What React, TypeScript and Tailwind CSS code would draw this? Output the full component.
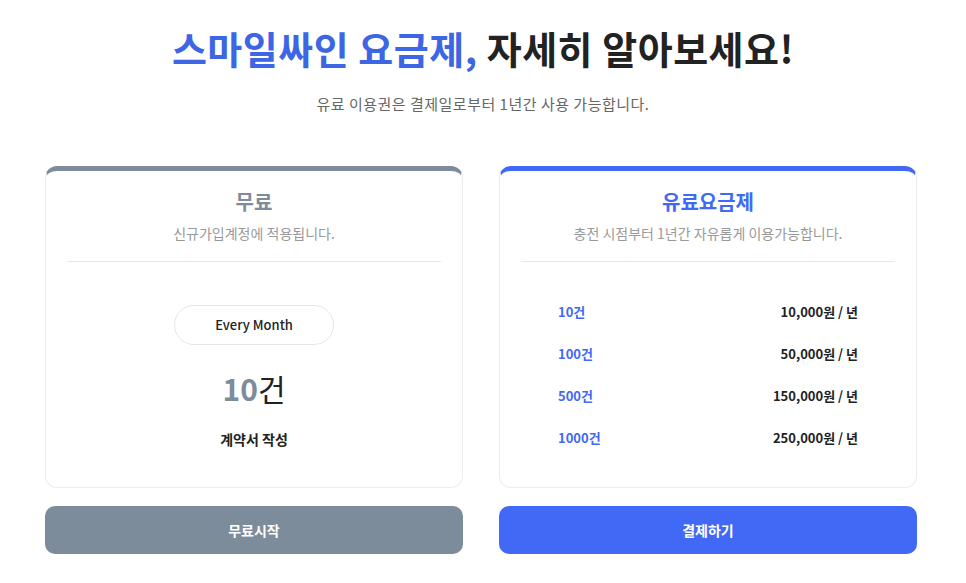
import React from "react";

const plans = [
  { count: "10건", price: "10,000원 / 년" },
  { count: "100건", price: "50,000원 / 년" },
  { count: "500건", price: "150,000원 / 년" },
  { count: "1000건", price: "250,000원 / 년" },
];

export default function App() {
  return (
    <div
      className="min-h-screen bg-white flex flex-col items-center"
      style={{ fontFamily: '"Noto Sans CJK KR", "Noto Sans", sans-serif' }}
    >
      {/* Heading */}
      <h1 className="mt-[22px] text-[38px] leading-[52px] font-bold tracking-[0.5px] text-[#222]">
        <span className="text-[#3c66e3]">스마일싸인 요금제,</span> 자세히 알아보세요!
      </h1>
      <p className="mt-[19px] text-[15px] leading-[22px] tracking-[0.5px] text-[#666]">
        유료 이용권은 결제일로부터 1년간 사용 가능합니다.
      </p>

      <div className="mt-[51px] grid grid-cols-2 gap-[36px] w-[872px] -ml-[4px]">
        {/* Free plan */}
        <div className="flex flex-col gap-[18px]">
          <div className="h-[322px] rounded-[12px] border border-[#ececec] border-t-[5px] border-t-[#7d8c9a] flex flex-col items-center">
            <h2 className="mt-[16px] text-[20px] leading-[30px] font-bold text-[#7d8c9a]">무료</h2>
            <p className="mt-[6px] text-[14px] leading-[20px] text-[#999]">신규가입계정에 적용됩니다.</p>
            <div className="mt-[18px] h-px w-[374px] bg-[#e8e8e8]" />
            <div className="mt-[43px] w-[160px] h-[40px] rounded-full border border-[#e3e6e8] flex items-center justify-center text-[13px] font-medium text-[#222]">
              Every Month
            </div>
            <div className="mt-[22px] text-[30px] leading-[42px] text-[#222]">
              <span className="font-bold text-[#7d8c9a]">10</span>건
            </div>
            <p className="mt-[20px] text-[14px] leading-[20px] font-semibold text-[#222]">계약서 작성</p>
          </div>
          <button className="h-[48px] rounded-[10px] bg-[#7d8c9a] text-white text-[14px] font-bold">
            무료시작
          </button>
        </div>

        {/* Paid plan */}
        <div className="flex flex-col gap-[18px]">
          <div className="h-[322px] rounded-[12px] border border-[#ececec] border-t-[5px] border-t-[#4169f5] flex flex-col items-center">
            <h2 className="mt-[16px] text-[20px] leading-[30px] font-bold text-[#4169f5]">유료요금제</h2>
            <p className="mt-[6px] text-[14px] leading-[20px] text-[#999]">충전 시점부터 1년간 자유롭게 이용가능합니다.</p>
            <div className="mt-[18px] h-px w-[374px] bg-[#e8e8e8]" />
            <div className="mt-[40px] w-full px-[58px] flex flex-col gap-[22px]">
              {plans.map((p) => (
                <div key={p.count} className="flex justify-between text-[13px] leading-[20px] font-semibold">
                  <span className="text-[#4169f5]">{p.count}</span>
                  <span className="text-[#222]">{p.price}</span>
                </div>
              ))}
            </div>
          </div>
          <button className="h-[48px] rounded-[10px] bg-[#4169f5] text-white text-[14px] font-bold">
            결제하기
          </button>
        </div>
      </div>
    </div>
  );
}
